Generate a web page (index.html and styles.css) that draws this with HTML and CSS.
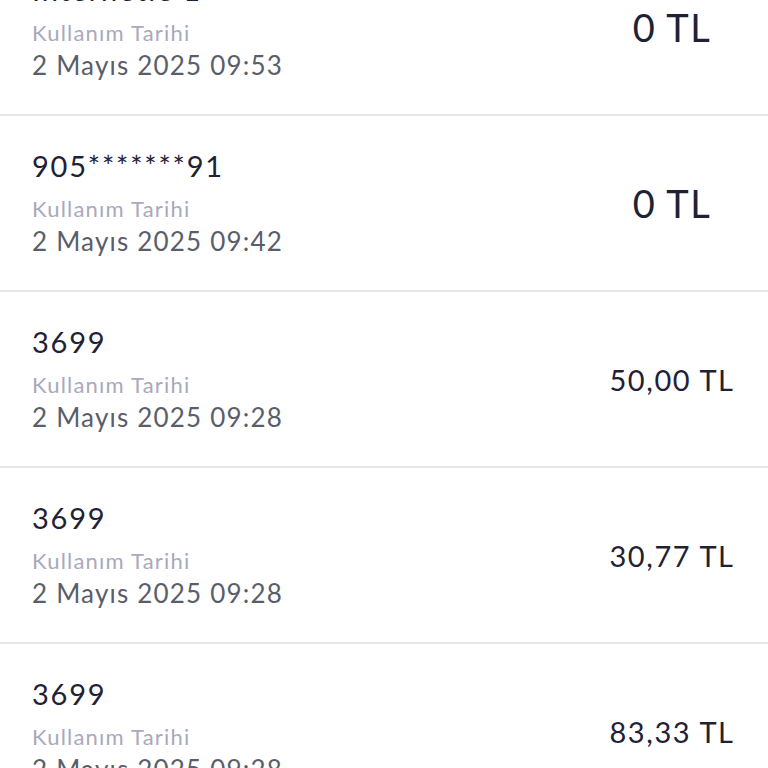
FILE: index.html
```html
<!DOCTYPE html>
<html lang="tr">
<head>
  <meta charset="UTF-8">
  <meta name="viewport" content="width=device-width, initial-scale=1.0">
  <title>Kullanım Geçmişi</title>
  <link rel="stylesheet" href="styles.css">
</head>
<body>
  <div class="usage-list">
    <div class="usage-row">
      <div class="usage-info">
        <p class="usage-title">İnternetle 1</p>
        <p class="usage-label">Kullanım Tarihi</p>
        <p class="usage-date">2 Mayıs 2025 09:53</p>
      </div>
      <p class="usage-amount amount-zero">0 TL</p>
    </div>

    <div class="usage-row">
      <div class="usage-info">
        <p class="usage-title">905*******91</p>
        <p class="usage-label">Kullanım Tarihi</p>
        <p class="usage-date">2 Mayıs 2025 09:42</p>
      </div>
      <p class="usage-amount amount-zero">0 TL</p>
    </div>

    <div class="usage-row">
      <div class="usage-info">
        <p class="usage-title">3699</p>
        <p class="usage-label">Kullanım Tarihi</p>
        <p class="usage-date">2 Mayıs 2025 09:28</p>
      </div>
      <p class="usage-amount">50,00 TL</p>
    </div>

    <div class="usage-row">
      <div class="usage-info">
        <p class="usage-title">3699</p>
        <p class="usage-label">Kullanım Tarihi</p>
        <p class="usage-date">2 Mayıs 2025 09:28</p>
      </div>
      <p class="usage-amount">30,77 TL</p>
    </div>

    <div class="usage-row">
      <div class="usage-info">
        <p class="usage-title">3699</p>
        <p class="usage-label">Kullanım Tarihi</p>
        <p class="usage-date">2 Mayıs 2025 09:28</p>
      </div>
      <p class="usage-amount">83,33 TL</p>
    </div>
  </div>
</body>
</html>
```

FILE: styles.css
```css
body {
  margin: 0;
  background-color: white;
  color: #1f2235;
  font-family: Lato, 'Noto Sans', sans-serif;
}

p {
  margin: 0;
}

.usage-list {
  margin-top: -60px;
}

.usage-row {
  display: flex;
  align-items: center;
  height: 174px;
  padding-left: 32px;
  border-bottom: 2px solid #e6e6ee;
}

.usage-info {
  flex: 1;
}

.usage-title {
  font-size: 29px;
  line-height: 36px;
  letter-spacing: 1.8px;
  color: #1f2235;
}

.usage-label {
  margin-top: 10px;
  font-size: 22px;
  line-height: 30px;
  letter-spacing: 1.2px;
  color: #a9a9bd;
}

.usage-date {
  font-size: 26px;
  line-height: 34px;
  letter-spacing: 1.2px;
  color: #5a5e6a;
}

.usage-amount {
  width: 160px;
  margin-right: 16px;
  text-align: center;
  font-size: 29px;
  letter-spacing: 1.6px;
  color: #1f2235;
}

.amount-zero {
  font-size: 38px;
  letter-spacing: 1.5px;
}
```
